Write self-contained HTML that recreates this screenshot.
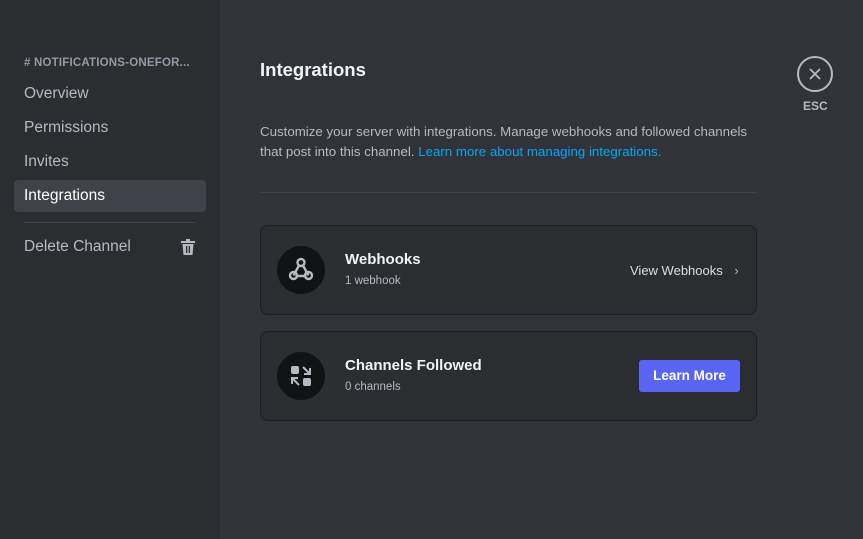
<!DOCTYPE html><html><head><style>
*{margin:0;padding:0;box-sizing:border-box}
body{width:863px;height:539px;background:#313338;font-family:"Liberation Sans",sans-serif;position:relative;overflow:hidden}
.sb{position:absolute;left:0;top:0;width:220px;height:539px;background:#2b2d31}
.abs{position:absolute;white-space:nowrap}
.nav{left:24px;font-size:15.5px;color:#b5bac1}
.card{position:absolute;left:260px;width:497px;height:90px;background:#2b2d31;border:1px solid #1e1f22;border-radius:8px}
.ic{position:absolute;left:16px;top:20px;width:48px;height:48px;border-radius:50%;background:#111214}
.ct{position:absolute;left:84px;top:25px;font-size:15px;font-weight:bold;color:#f2f3f5}
.cs{position:absolute;left:84px;top:49px;font-size:11.5px;color:#b5bac1}
</style></head><body>
<div class="sb"></div>
<div class="abs" style="left:24px;top:57px;font-size:11.5px;font-weight:bold;color:#949ba4;letter-spacing:.2px">#&nbsp;NOTIFICATIONS-ONEFOR...</div>
<div class="abs nav" style="top:85px">Overview</div>
<div class="abs nav" style="top:119px">Permissions</div>
<div class="abs nav" style="top:153px">Invites</div>
<div class="abs" style="left:14px;top:180px;width:192px;height:32px;background:#404249;border-radius:4px"></div>
<div class="abs nav" style="top:187px;color:#fff">Integrations</div>
<div class="abs" style="left:24px;top:222px;width:172px;height:1px;background:#3f4147"></div>
<div class="abs nav" style="top:238px">Delete Channel</div>
<svg class="abs" style="left:181px;top:239px" width="14" height="16" viewBox="0 0 14 16"><rect x="0" y="2" width="14" height="2" fill="#b5bac1"/><rect x="5" y="0" width="4" height="2" fill="#b5bac1"/><path d="M1.5 5h11l-1 11h-9z" fill="#b5bac1"/><rect x="5" y="7" width="1.3" height="7" fill="#2b2d31"/><rect x="7.7" y="7" width="1.3" height="7" fill="#2b2d31"/></svg>

<div class="abs" style="left:260px;top:59px;font-size:18.5px;font-weight:bold;color:#f2f3f5">Integrations</div>
<div class="abs" style="left:260px;top:122px;font-size:13.3px;line-height:20px;color:#b5bac1">Customize your server with integrations. Manage webhooks and followed channels<br>that post into this channel. <span style="color:#00a8fc">Learn more about managing integrations.</span></div>
<div class="abs" style="left:260px;top:192px;width:497px;height:1px;background:#3f4147"></div>

<div class="card" style="top:225px">
<div class="ic"><svg width="48" height="48" viewBox="0 0 48 48" fill="none" stroke="#b5bac1" stroke-width="2.4" stroke-linecap="round"><circle cx="24" cy="16.5" r="3.5"/><circle cx="16.5" cy="29.5" r="3.5"/><circle cx="31.5" cy="29.5" r="3.5"/><path d="M22 19.5 17 28.5M26 19.5 31 28.5M19.5 30h9"/></svg></div>
<div class="ct">Webhooks</div><div class="cs">1 webhook</div>
<div class="abs" style="left:369px;top:37px;font-size:13px;color:#dbdee1">View Webhooks <span style="margin-left:8px;color:#b5bac1">›</span></div>
</div>
<div class="card" style="top:331px">
<div class="ic"><svg width="48" height="48" viewBox="0 0 48 48" fill="#b5bac1"><rect x="14" y="14" width="8" height="8" rx="2"/><rect x="26" y="26" width="8" height="8" rx="2"/><path d="M26 15l7 7M33 16v6h-6M22 33l-7-7M15 32v-6h6" stroke="#b5bac1" stroke-width="2" fill="none"/></svg></div>
<div class="ct">Channels Followed</div><div class="cs">0 channels</div>
<div class="abs" style="left:378px;top:28px;width:101px;height:32px;background:#5865f2;border-radius:3px;color:#fff;font-size:13.5px;font-weight:bold;text-align:center;line-height:32px">Learn More</div>
</div>

<div class="abs" style="left:797px;top:56px;width:36px;height:36px;border:2px solid #b5bac1;border-radius:50%"></div>
<svg class="abs" style="left:808px;top:67px" width="14" height="14" viewBox="0 0 14 14" stroke="#b5bac1" stroke-width="1.8"><path d="M2 2l10 10M12 2 2 12"/></svg>
<div class="abs" style="left:803px;top:99px;font-size:12px;font-weight:bold;color:#b5bac1">ESC</div>
</body></html>
